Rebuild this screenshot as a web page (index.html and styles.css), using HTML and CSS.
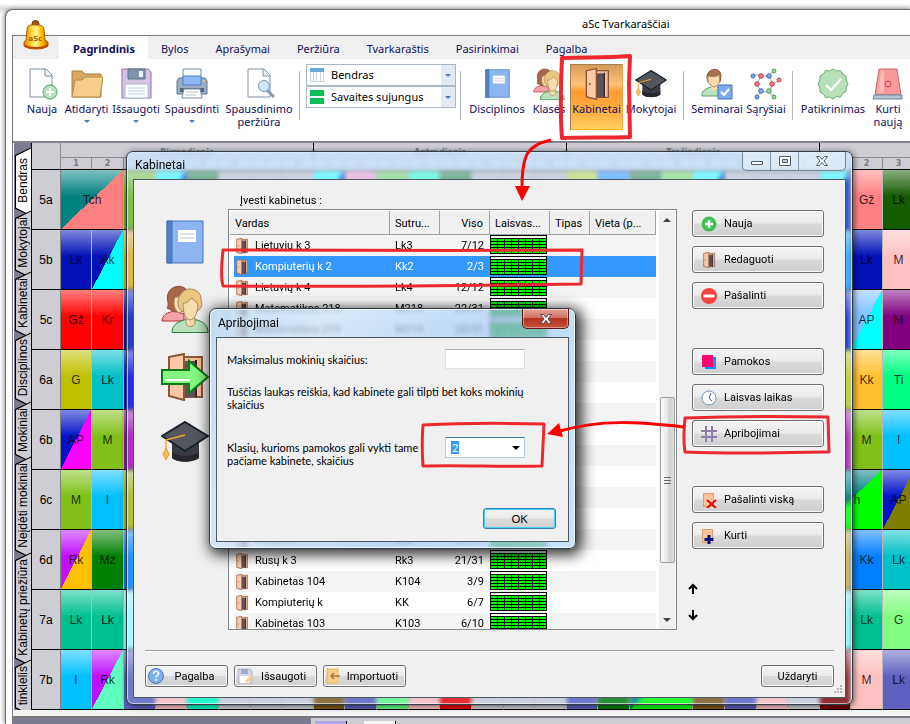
FILE: index.html
```html
<!DOCTYPE html>
<html lang="lt">
<head>
<meta charset="utf-8">
<title>aSc Tvarkaraščiai</title>
<link rel="stylesheet" href="styles.css">
</head>
<body>
<svg class="defs" aria-hidden="true">
  <symbol id="i-book" viewBox="0 0 38 44">
    <path d="M1 1h36v42H1z" fill="#8bb4f0" stroke="#4573b4"/>
    <path d="M1 1h5v42H1z" fill="#5280c2" stroke="#4573b4"/>
    <path d="M12 10h18v12H12z" fill="#fff"/><path d="M14 14h14M14 18h14" stroke="#b4c4dc"/>
  </symbol>
  <symbol id="i-people" viewBox="0 0 48 48">
    <path d="M1 36c0-6 6-9 13-10l9 3v7z" fill="#f4a3a8" stroke="#b03030"/>
    <path d="M6 23c3-4-1-8 1-14C10-1 25-1 27 8l-3 17-10 2c-3-1-5-3-8-4z" fill="#a6674a" stroke="#84503a"/>
    <path d="M14 12c3 1 6-2 8-4l4 14-8 6c-5-3-6-10-4-16z" fill="#f9dcae" stroke="#a9855a"/>
    <path d="M11 47.500c0-7 5-11 14-13h9c9 2 13 6 13 13z" fill="#bce0bf" stroke="#248534"/>
    <path d="M25 33v6c3 4 7 3 9-1v-5z" fill="#f9dcae" stroke="#a9855a"/>
    <path d="M18 23c-3-8 1-17 9-19 9-1 14 6 13 11 2 5 0 8-2 10l-3 2H22z" fill="#eac680" stroke="#a9855a"/>
    <path d="M22 18c4 1 6-3 9-5 2 4 5 3 6 7-1 9-3 14-8 15-5-1-7-8-7-17z" fill="#f9dcae" stroke="#a9855a"/>
  </symbol>
  <symbol id="i-door" viewBox="0 0 36 48">
    <path d="M7 4h28v40H7z" fill="#f7bd95" stroke="#8a563c" stroke-width="2"/>
    <path d="M17 8h13v36H17z" fill="#5e5058"/><path d="M29 7v37" stroke="#33262c" stroke-width="2"/>
    <path d="M2 4 17 1v46L2 43z" fill="#fbc9a5" stroke="#8a563c" stroke-width="2"/>
    <circle cx="7" cy="24" r="1.500" fill="#8a563c"/>
  </symbol>
  <symbol id="i-cap" viewBox="0 0 48 42">
    <path d="M11 18v18c3 6 23 6 27 0V18z" fill="#3b3c43"/><path d="M11 31v6c5 5 21 5 27 0v-6c-5 5-21 5-27 0z" fill="#27282d"/>
    <path d="M24 1 47 15 24 30 1 15z" fill="#54575d" stroke="#17232e" stroke-width="2"/>
    <path d="M24 14 5 19v9" fill="none" stroke="#f1a333" stroke-width="1.500"/><path d="m5 27 3 6-3 6-3-6z" fill="#f8bd58" stroke="#e89a28"/>
  </symbol>
</svg>

<div class="window">
  <header class="titlebar">
    <svg class="bell" viewBox="0 0 26 30" aria-hidden="true">
      <defs><linearGradient id="gold"><stop offset="0" stop-color="#e87800"/><stop offset=".3" stop-color="#ffd52a"/><stop offset=".5" stop-color="#fff3a0"/><stop offset=".7" stop-color="#ffc800"/><stop offset="1" stop-color="#c86a00"/></linearGradient></defs>
      <circle cx="12.500" cy="4" r="3.500" fill="#a85508" stroke="#6e3508"/>
      <path d="M4 10c0-6 4-5 8.500-5S21 5 21 10l1 10 3 2v4c-4 4-20 4-24 0v-4l2-2z" fill="url(#gold)" stroke="#b35b04"/>
      <path d="M1 24c5 4 19 4 24 0v2c-5 4-19 4-24 0z" fill="#b84a05"/>
      <text x="12.500" y="21" class="bell-text">aSc</text>
    </svg>
    <span>aSc Tvarkaraščiai</span>
  </header>
  <div class="frame">
    <nav class="tabs">
      <a href="#" class="tab tab-on">Pagrindinis</a><a href="#" class="tab">Bylos</a><a href="#" class="tab">Aprašymai</a><a href="#" class="tab">Peržiūra</a><a href="#" class="tab">Tvarkaraštis</a><a href="#" class="tab">Pasirinkimai</a><a href="#" class="tab">Pagalba</a>
    </nav>
    <div class="ribbon">
      <button class="tool w40"><svg viewBox="0 0 32 32"><path d="M4 1h16l6 6v22H4z" fill="#fff" stroke="#7d91a5"/><path d="M19 1v7h7" fill="#eef3f8" stroke="#7d91a5"/><circle cx="24" cy="24" r="7" fill="#b9e2bd" stroke="#57a068"/><path d="M24 20v8M20 24h8" stroke="#fff" stroke-width="2"/></svg>Nauja</button>
      <button class="tool w49"><svg viewBox="0 0 32 32"><path d="M1 29V3h10l3 3h16v23z" fill="#d7a762" stroke="#a8803c"/><path d="M1 29 4 12h7l3-3h18l-3 20z" fill="#f5ce8a" stroke="#b08c4c"/></svg>Atidaryti<i class="caret"></i></button>
      <button class="tool w50"><svg viewBox="0 0 32 32"><path d="M2 1h26l3 3v26H2z" fill="#d5c2e4" stroke="#8e73ac"/><path d="M8 1h17v10H8z" fill="#8195aa" stroke="#5e7288"/><path d="M19 3h4v6h-4z" fill="#eaf1f7"/><path d="M5 16h23v14H5z" fill="#fff" stroke="#a8bdd4"/><path d="M8 20h17M8 23h17M8 26h17" stroke="#b8d0ec"/></svg>Išsaugoti<i class="caret"></i></button>
      <button class="tool w62"><svg viewBox="0 0 32 32"><path d="M7 1h18v9H7z" fill="#f7fafc" stroke="#758ca4"/><path d="M3 10h26l2 3v13H1V13z" fill="#9aadc6" stroke="#5d7795"/><path d="M7 8h18v9H7z" fill="#8bb8f4" stroke="#4c7fc0"/><path d="M4 20h24v4H4z" fill="#52657c"/><path d="M8 21h16l2 9H6z" fill="#fff" stroke="#7c90a6"/><path d="M10 24h12M10 27h10" stroke="#b2bdc9"/><circle cx="28" cy="13" r="1" fill="#ffc84a"/></svg>Spausdinti<i class="caret"></i></button>
      <button class="tool w72"><svg viewBox="0 0 32 32"><path d="M5 1h16l6 6v22H5z" fill="#fff" stroke="#7d91a5"/><path d="M20 1v7h7" fill="#eef3f8" stroke="#7d91a5"/><path d="m24 22 7 7" stroke="#8499b0" stroke-width="3"/><circle cx="21" cy="18" r="5.500" fill="#cfe7fc" stroke="#7899b8"/></svg>Spausdinimo<br>peržiūra</button>
      <span class="sep"></span>
      <div class="combos">
        <label class="combo"><svg viewBox="0 0 14 14"><path d="M0 0h14v14H0z" fill="#c4d2e0"/><path d="M0 0h14v4H0z" fill="#6fa6d8"/><path d="M1 4h2v9H1zM4 4h2v9H4zM7 4h3v9H7zM11 4h2v9h-2z" fill="#fff"/></svg><select aria-label="Vaizdas"><option>Bendras</option></select><i class="caret"></i></label>
        <label class="combo"><svg viewBox="0 0 14 14"><path d="M0 0h14v6H0zM0 8h14v6H0z" fill="#06bf55"/></svg><select aria-label="Savaitės"><option>Savaites sujungus</option></select><i class="caret"></i></label>
      </div>
      <span class="sep sep-tight"></span>
      <button class="tool w62"><svg viewBox="0 0 32 32"><use href="#i-book" x="4" y="1" width="25" height="29"/></svg>Disciplinos</button>
      <button class="tool w42"><svg viewBox="0 0 32 32"><use href="#i-people"/></svg>Klasės</button>
      <button class="tool tool-on w53"><svg viewBox="0 0 32 32"><use href="#i-door"/></svg>Kabinetai</button>
      <button class="tool w56"><svg viewBox="0 0 32 32"><use href="#i-cap"/></svg>Mokytojai</button>
      <span class="sep"></span>
      <button class="tool w54"><svg viewBox="0 0 32 32"><path d="M1 28c0-6 4-8 10-9 9 0 13 3 13 9z" fill="#bce0bf" stroke="#60a06c"/><path d="M10 16h6v5c-2 2-4 2-6 0z" fill="#f9dcae"/><path d="M6 10C5 0 20-2 20 8l-1 6H7z" fill="#a6704c" stroke="#825238"/><path d="M7 8c4 1 8 1 11-1 2 7-1 11-5 12-4-1-7-5-6-11z" fill="#f9dcae" stroke="#b08a5a"/><path d="M17 17h14v14H17z" fill="#7fabec" stroke="#4573b4"/><path d="m20 24 3 3 5-6" fill="none" stroke="#fff" stroke-width="2"/></svg>Seminarai</button>
      <button class="tool w44"><svg viewBox="0 0 32 32"><g fill="none" stroke="#9aa8b4"><path d="m11 8-4 8 4 8 8 0 4-8-4-8zM2 7h9M19 8l5-6M23 16l7-4M11 24l-5 6M19 24l5 6"/></g><g fill="#f27c84" stroke="#b94650"><circle cx="11" cy="8" r="2.300"/><circle cx="7" cy="16" r="2.300"/><circle cx="22" cy="16" r="2.300"/><circle cx="29" cy="12" r="2"/></g><g fill="#78a9ef" stroke="#416eaa"><circle cx="3" cy="8" r="2"/><circle cx="19" cy="8" r="2.300"/><circle cx="11" cy="23" r="2.300"/><circle cx="7" cy="29" r="2"/></g><g fill="#98d5a0" stroke="#519c60"><circle cx="24" cy="3" r="2"/><circle cx="19" cy="23" r="2.300"/><circle cx="24" cy="29" r="2"/></g></svg>Sąryšiai</button>
      <span class="sep"></span>
      <button class="tool w68"><svg viewBox="0 0 32 32"><path d="m16 1 3.500 2 4-.5 2 3.500 3.500 2v4l2 4-2 3.500v4l-3.500 2-2 3.500-4-.5L16 31l-3.500-2-4 .5-2-3.500L3 24v-4l-2-4 2-4V8l3.500-2 2-3.500 4 .5z" fill="#b8e0ba" stroke="#67ab74"/><path d="m9 17 5 5 10-11" fill="none" stroke="#fff" stroke-width="2"/></svg>Patikrinimas</button>
      <button class="tool w42"><svg viewBox="0 0 32 32"><path d="M7 1h18l4 26H3z" fill="#f79a9c" stroke="#c9656c"/><path d="m9 3-3 22h6V3z" fill="#fbb9b9"/><circle cx="16" cy="16" r="3" fill="none" stroke="#c2474f"/><path d="M2 27h28v4H1z" fill="#b6c5d4" stroke="#71869c"/></svg>Kurti<br>naują</button>
    </div>
    <div class="work">
      <div class="side">
        <button class="vtab vtab-on"><span>Bendras</span></button><button class="vtab"><span>Mokytojai</span></button><button class="vtab"><span>Kabinetai</span></button><button class="vtab"><span>Disciplinos</span></button><button class="vtab"><span>Mokiniai</span></button><button class="vtab"><span>Neįdėti mokiniai</span></button><button class="vtab"><span>Kabinetų priežiūra</span></button><button class="vtab"><span>tinklelis</span></button>
      </div>
      <div class="sheet"><table class="tt" id="tt"></table></div>
    </div>
    <div class="split"></div>
    <div class="tray"><div class="tray-left"></div><i class="chip lilac"></i><i class="chip"></i></div>
  </div>
</div>

<section class="dialog rooms" aria-label="Kabinetai">
  <div class="dlg-title"><span>Kabinetai</span>
    <div class="winbtns">
      <button aria-label="Sumažinti"><svg viewBox="0 0 14 12"><path d="M1.500 6.500h11v3h-11z" fill="#fff" stroke="#555c68"/></svg></button>
      <button aria-label="Padidinti"><svg viewBox="0 0 14 12"><path d="M1.500 1.500h11v9h-11z" fill="#fff" stroke="#555c68"/><path d="M4.500 4.500h5v3h-5z" fill="#bcd0e6" stroke="#555c68"/></svg></button>
      <button class="wide" aria-label="Uždaryti langą"><svg viewBox="0 0 14 12"><path d="M1.500 1.500h3l2.500 3 2.500-3h3L9 6l3.500 4.500h-3L7 7.500l-2.500 3h-3L5 6z" fill="#fff" stroke="#555c68"/></svg></button>
    </div>
  </div>
  <div class="panel">
    <div class="cols">
      <div class="steps">
        <svg width="40" height="46" viewBox="-1 -1 40 46"><use href="#i-book" width="38" height="44"/></svg>
        <svg width="48" height="48"><use href="#i-people" width="48" height="48"/></svg>
        <svg width="48" height="48"><use href="#i-door" x="6" width="36" height="48"/><path d="M1 17h27V8l19 16-19 16v-9H1z" fill="#86f683" stroke="#0c7a14" stroke-width="2"/><path d="M4 27h25" stroke="#fff" stroke-width="2"/></svg>
        <svg width="48" height="42"><use href="#i-cap" width="48" height="42"/></svg>
      </div>
      <div class="listcol">
        <p class="caption">Įvesti kabinetus :</p>
        <div class="list">
          <table class="rt">
            <colgroup><col class="c-name"><col class="c-short"><col class="c-all"><col class="c-free"><col class="c-type"><col class="c-place"></colgroup>
            <thead><tr><th>Vardas</th><th>Sutru...</th><th class="num">Viso</th><th>Laisvas...</th><th>Tipas</th><th>Vieta (p...</th></tr></thead>
            <tbody id="rooms"></tbody>
          </table>
          <div class="scroll"><i class="up"></i><div class="thumb"><i></i><i></i><i></i></div><i class="down"></i></div>
        </div>
      </div>
      <div class="actions">
        <button class="act"><svg viewBox="0 0 16 16"><circle cx="8" cy="8" r="7.500" fill="#3fc14d"/><path d="M8 4v8M4 8h8" stroke="#fff" stroke-width="2.500"/></svg>Nauja</button>
        <button class="act"><svg viewBox="0 0 16 16"><use href="#i-door"/></svg>Redaguoti</button>
        <button class="act"><svg viewBox="0 0 16 16"><circle cx="8" cy="8" r="8" fill="#f8413d"/><path d="M2.500 6.500h11v3h-11z" fill="#fff"/></svg>Pašalinti</button>
        <button class="act gap-top"><svg viewBox="0 0 16 16"><path d="M4 3h11v12H4z" fill="#0794ff"/><path d="M1 1h11v12H1z" fill="#ff0576"/></svg>Pamokos</button>
        <button class="act"><svg viewBox="0 0 16 16"><circle cx="8" cy="8" r="7" fill="#fff" stroke="#6f91bb"/><path d="M10 3 8 8l3 3" fill="none" stroke="#385a90"/></svg>Laisvas laikas</button>
        <button class="act"><svg viewBox="0 0 16 16"><path d="M5 0v16M11 0v16M0 5h16M0 11h16" stroke="#8e7da8" stroke-width="2"/></svg>Apribojimai</button>
        <button class="act gap-more"><svg viewBox="0 0 16 16"><path d="M2.500 1.500h10v13h-10z" fill="#ffc59c" stroke="#d59b72"/><path d="m6 8 9 8M15 8l-9 8" stroke="#e90808" stroke-width="2"/></svg>Pašalinti viską</button>
        <button class="act"><svg viewBox="0 0 16 16"><path d="M1.500 1.500h10v13h-10z" fill="#ffc59c" stroke="#d59b72"/><path d="M8 7v9M3.500 11.500h9" stroke="#08127e" stroke-width="3"/></svg>Kurti</button>
        <button class="move move-up" aria-label="Aukštyn"><svg viewBox="0 0 10 12"><path d="M5 11V2M1 6l4-4 4 4" fill="none" stroke="#000" stroke-width="2"/></svg></button>
        <button class="move" aria-label="Žemyn"><svg viewBox="0 0 10 12"><path d="M5 1v9M1 6l4 4 4-4" fill="none" stroke="#000" stroke-width="2"/></svg></button>
      </div>
    </div>
    <div class="foot">
      <button class="btn"><svg viewBox="0 0 16 16"><circle cx="8" cy="8" r="7.500" fill="#7faeea" stroke="#4d7cbc"/><path d="M5.500 6c0-4 6-3 5 0-1 1.500-2.500 1.500-2.500 3.500M8 11v2" fill="none" stroke="#fff" stroke-width="1.500"/></svg><span>Pagalba</span></button>
      <button class="btn"><svg viewBox="0 0 16 16"><path d="M1 1h12l2 2v12H1z" fill="#d9d3ea" stroke="#bcb3d6"/><path d="M4 1h7v5H4z" fill="#9fb0c4"/><path d="M3 8h9v7H3z" fill="#fff"/><path d="m8 13 6-6 2 2-6 6z" fill="#f4cf84"/></svg><span>Išsaugoti</span></button>
      <button class="btn"><svg viewBox="0 0 16 16"><path d="M1 1h11v14H1z" fill="#f4d08c" stroke="#e5b866"/><path d="M14 8H5M8 5 5 8l3 3" fill="none" stroke="#a87931" stroke-width="1.500"/></svg><span>Importuoti</span></button>
      <button class="btn btn-close"><span>Uždaryti</span></button>
    </div>
    <svg class="grip" viewBox="0 0 9 9"><path d="M7 1h2M4 4h2M7 4h2M1 7h2M4 7h2M7 7h2" stroke="#b8b8b8" stroke-width="2"/></svg>
  </div>
</section>

<section class="dialog limits" aria-label="Apribojimai">
  <div class="dlg-title"><span>Apribojimai</span>
    <button class="close" aria-label="Uždaryti"><svg viewBox="0 0 14 12"><path d="M1.500 1.500h3l2.500 3 2.500-3h3L9 6l3.500 4.500h-3L7 7.500l-2.500 3h-3L5 6z" fill="#fff" stroke="#5b4750"/></svg></button>
  </div>
  <form class="panel">
    <div class="field"><label for="max">Maksimalus mokinių skaičius:</label><input id="max" type="text"></div>
    <p class="note">Tuščias laukas reiškia, kad kabinete gali tilpti bet koks mokinių<br>skaičius</p>
    <div class="field"><label for="cls">Klasių, kurioms pamokos gali vykti tame pačiame kabinete, skaičius</label><span class="pick"><select id="cls"><option>2</option></select><i class="caret"></i></span></div>
    <button type="button" class="ok">OK</button>
  </form>
</section>

<svg class="marks" width="910" height="724" viewBox="0 0 910 724" aria-hidden="true">
  <g fill="none" stroke="#ed2830" stroke-width="4" stroke-linejoin="round" stroke-linecap="round">
    <path d="M562 58c22-1 45 0 68-2l-1 27 1 54c-22 1-40 0-68 1-2-24-1-56 0-80z"/>
    <path d="M223 250c110 0 240 1 359 0l-1 34c-120 2-230 3-358 2-3-12-1-24 0-36z" stroke-width="3"/>
    <path d="M685 418c50-2 95-2 143-1l1 35c-50 1-95 2-144 0-2-12-1-24 0-34z" stroke-width="3"/>
    <path d="M423 425c40-2 80-2 121-1l-2 42c-40 1-80-1-119 0-1-14-1-28 0-41z" stroke-width="3"/>
  </g>
  <g fill="none" stroke="#f00" stroke-width="3">
    <path d="M551 140c-24 5-29 15-29 48"/><path d="M684 427c-47-5-82-8-124 4"/>
  </g>
  <path d="M515 186h15l-8 15zM547 434l12-11 4 14z" fill="#f00"/>
</svg>
<script src="script.js"></script>
</body>
</html>
```

FILE: styles.css
```css
* { box-sizing: border-box; }
body { margin: 0; padding: 9px 0 0 5px; min-height: 100vh; overflow: hidden; background: linear-gradient(#fff 0, #fff 3px, #dcdcdc 9px, #fff 14px); font: 11px/13px "Noto Sans", sans-serif; color: #000; position: relative; }
button { font: inherit; color: inherit; padding: 0; margin: 0; border: 0; background: none; }
p { margin: 0; }
.defs { position: absolute; width: 0; height: 0; }

.window { background: #fff; border: 1px solid #6e6e6e; border-width: 1px 0 0 1px; border-radius: 8px 0 0 0; box-shadow: -1px 0 4px rgba(0,0,0,.4); padding-left: 6px; min-height: calc(100vh - 9px); }
.titlebar { height: 25px; padding: 7px 0 0 570px; position: relative; font-size: 11px; white-space: nowrap; }
.bell { position: absolute; left: 11px; top: 10px; width: 26px; height: 30px; z-index: 1; }
.bell-text { font: bold 7px "DejaVu Sans", sans-serif; text-anchor: middle; fill: #a85a08; }
.frame { border: 1px solid #7a7a7a; border-width: 1px 0 0 1px; }
.tabs { display: flex; height: 23px; background: #efefef; padding-left: 46px; }
.tab { padding: 6px 14px 0 13px; color: #10105c; text-decoration: none; white-space: nowrap; }
.tab-on { background: #fff; font-weight: bold; padding: 6px 13px 0 14px; }

.ribbon { display: flex; height: 82px; padding: 5px 0 0 9px; color: #10105c; overflow: hidden; }
.tool { display: flex; flex: none; flex-direction: column; align-items: center; white-space: nowrap; height: 66px; padding-top: 3px; border: 1px solid transparent; }
.tool svg { width: 32px; height: 32px; flex: none; margin-bottom: 2px; }
.tool-on { background: linear-gradient(#d89a58, #ffc27a 30%, #ff9a30 42%, #ffb648 80%, #ffcf60); border-color: #a68050 #e8a848 #f5b020 #a68050; }
.w40 { width: 40px; } .w42 { width: 42px; } .w44 { width: 44px; } .w49 { width: 49px; } .w50 { width: 50px; } .w53 { width: 53px; } .w54 { width: 54px; } .w56 { width: 56px; } .w62 { width: 62px; } .w68 { width: 68px; } .w72 { width: 72px; }
.caret { flex: none; width: 0; height: 0; border: 3px solid transparent; border-top-color: #4a7ab8; border-bottom: 0; }
.tool .caret { margin-top: 5px; }
.sep { flex: none; width: 1px; height: 49px; margin: 7px 6px 0 4px; background: #b8bcc2; }
.sep-tight { margin-right: 5px; }
.combos { width: 150px; flex: none; }
.combo { display: flex; align-items: center; height: 22px; border: 1px solid #a9b8c8; padding-left: 3px; background: linear-gradient(90deg, #fff 134px, #e4eaf3 134px); }
.combo svg { width: 14px; height: 14px; }
.combo select { appearance: none; border: 0; background: none; flex: 1; min-width: 0; padding: 0 0 0 7px; font: inherit; line-height: 16px; color: #000; }
.combo .caret { margin-right: 4px; }

.work { display: flex; border-top: 2px solid #84848c; padding-left: 1px; }
.side { width: 18px; flex: none; height: 567px; overflow: hidden; display: flex; flex-direction: column; background: #7b7b90; padding-top: 6px; border-right: 1px solid #000; }
.vtab { flex: none; position: relative; width: 18px; padding: 6px 0 5px; writing-mode: vertical-rl; transform: rotate(180deg); font: 12px/18px "Liberation Sans", sans-serif; text-align: center; }
.vtab span { position: relative; z-index: 2; }
.vtab::before, .vtab::after { content: ""; position: absolute; inset: -5px 1px -2px 0; background: #000; clip-path: polygon(0 0, 100% 8px, 100% calc(100% - 8px), 0 100%); }
.vtab::after { inset: -4px 2px -1px 0; background: #cecdd3; }
.vtab-on { padding: 9px 0; }
.vtab-on::after { background: #fff; }
.sheet { flex: 1; min-width: 0; overflow: hidden; }
.tt { table-layout: fixed; width: 883px; border-spacing: 0; font: 12px "Liberation Sans", sans-serif; background: #cecdd3; }
.tt col { width: 32px; }
.tt col.hd { width: 29px; }
.tt col.slim { width: 31px; }
.tt th, .tt td { padding: 0; text-align: center; font-weight: normal; overflow: hidden; white-space: nowrap; }
.tt thead th { border-right: 1px solid #8c8c92; color: #7a7a80; font: bold 8px/10px "DejaVu Sans", sans-serif; }
.tt .days th { height: 15px; border-bottom: 1px solid #8c8c92; vertical-align: bottom; line-height: 8px; }
.tt .days th + th { border-right-color: #000; }
.tt .hours th { height: 12px; border-bottom: 1px solid #000; }
.tt .days .none { border-bottom: 0; }
.tt tbody th, .tt td { height: 60px; border-bottom: 1px solid #000; border-right: 1px solid #b8b8b8; }
.tt tbody th { border-right-color: #808080; }
.tt td { color: rgba(0,0,0,.8); background-color: var(--a, #cecdd3); }
.tt .lesson { background-image: linear-gradient(rgba(255,255,255,.5), transparent 45%); }
.tt .split-lesson { background-image: linear-gradient(to bottom right, transparent 50%, var(--b) 50%), linear-gradient(rgba(255,255,255,.5), transparent 45%); }
.split { height: 8px; background: #f4f4f4; border-bottom: 2px solid #77777c; }
.tray { display: flex; height: 6px; background: #cecdd3; gap: 17px; align-items: flex-end; }
.tray-left { width: 298px; height: 6px; background: #7b7b90; margin-right: -13px; }
.chip { width: 32px; height: 3px; background: #f4f4f4; border-right: 1px solid #000; }
.lilac { background: #b0a8e8; }

.dialog { position: absolute; border: 1px solid #303c48; border-radius: 7px; padding: 0 6px 6px; background: rgba(190,220,255,.2); backdrop-filter: blur(2px); box-shadow: inset 0 0 0 1px rgba(255,255,255,.6), 1px 1px 6px rgba(0,0,0,.6); font: 11px/13px Roboto, sans-serif; }
.rooms { left: 126px; top: 151px; width: 727px; }
.limits { left: 209px; top: 308px; width: 367px; background: linear-gradient(115deg, rgba(178,212,242,.7), rgba(205,226,248,.75) 25%, rgba(165,205,245,.7) 60%, rgba(190,222,255,.8)); box-shadow: inset 0 0 0 1px rgba(255,255,255,.75), 3px 3px 14px 3px rgba(0,0,0,.8); }
.dlg-title { display: flex; justify-content: space-between; height: 27px; margin: 0 -5px; padding: 0 5px 0 7px; border-radius: 6px 6px 0 0; background: linear-gradient(rgba(205,230,255,.75), rgba(205,230,255,.75) 16px, rgba(205,230,255,.1) 20px); line-height: 27px; font-size: 12px; }
.limits .dlg-title { height: 28px; background: none; line-height: 28px; }
.winbtns { display: flex; height: 19px; border: 1px solid #76879a; border-top: 0; border-radius: 0 0 5px 5px; background: rgba(255,255,255,.35); }
.winbtns button { width: 28px; height: 18px; border-right: 1px solid #8a9bac; display: grid; place-items: center; }
.winbtns button.wide { width: 46px; border: 0; }
.winbtns svg, .close svg { width: 14px; height: 12px; }
.close { width: 47px; height: 20px; display: grid; place-items: center; border: 1px solid #5c1a18; border-top: 0; border-radius: 0 0 5px 5px; background: linear-gradient(#e5a79a, #cf7060 45%, #b03420 50%, #c85038); box-shadow: inset 0 0 0 1px rgba(255,255,255,.4); }
.panel { position: relative; background: #f0f0f0; border: 1px solid #4c5862; }

.rooms .panel { padding: 14px 11px 10px 11px; }
.cols { display: flex; padding-right: 10px; }
.steps { width: 83px; display: flex; flex-direction: column; align-items: center; padding: 25px 3px 0 0; }
.steps svg { flex: none; margin-bottom: 20px; }
.listcol { flex: 1; min-width: 0; }
.caption { padding-left: 12px; margin-bottom: 2px; font-size: 11px; }
.list { display: flex; justify-content: space-between; height: 421px; border: 1px solid #828790; background: #fff; padding: 1px 1px 0; overflow: hidden; }
.rt { table-layout: fixed; width: 426px; border-spacing: 0; flex: none; align-self: flex-start; }
.c-name { width: 160px; } .c-short { width: 50px; } .c-all { width: 50px; } .c-free { width: 60px; } .c-type { width: 40px; } .c-place { width: 66px; }
.rt th { height: 24px; padding: 2px 0 0 5px; text-align: left; font-weight: normal; background: #f0f0f0; border-right: 1px solid #a0a0a0; border-bottom: 1px solid #a0a0a0; white-space: nowrap; }
.rt th.num { text-align: right; padding-right: 6px; }
.rt td { height: 21px; padding: 0 0 0 5px; white-space: nowrap; }
.rt td:first-child { padding-left: 2px; }
.rt td.num { text-align: right; padding-right: 6px; }
.rt td.free { padding: 0; vertical-align: top; }
.rt tr:nth-child(odd) td { background: #f4f4f4; }
.rt tbody tr.sel td { background: #3399ff; color: #fff; }
.rt tbody td:first-child { border-left: 4px solid #fff; }
.roomname { display: flex; align-items: center; gap: 7px; }
.roomname svg { width: 12px; height: 16px; }
.mini { width: 57px; height: 19px; border: solid #000; border-width: 1px 0 0 1px; background: repeating-linear-gradient(90deg, transparent 0 6px, #000 6px 7px), linear-gradient(#000, #000) 0 2px / 100% 1px no-repeat, repeating-linear-gradient(#0f0 0 2px, #000 2px 3px) 0 3px / 100% 15px no-repeat, #fff; }
.mini::before { content: ""; display: block; height: 2px; background: #fff; border-right: 1px solid #000; }
.scroll { width: 16px; display: flex; flex-direction: column; align-items: center; background: #f0f0f0; padding: 7px 0; }
.up, .down { border: 4px solid transparent; border-top: 0; border-bottom: 4px solid #404040; }
.down { border-top: 4px solid #404040; border-bottom: 0; margin-top: auto; }
.thumb { width: 15px; height: 166px; margin-top: 175px; border: 1px solid #a0a0a0; border-radius: 2px; background: linear-gradient(90deg, #f8f8f8, #e8e8e8 50%, #d2d2d6 60%, #dcdcdc); display: flex; flex-direction: column; align-items: center; justify-content: center; gap: 2px; }
.thumb i { width: 7px; height: 1px; background: #666; }
.actions { width: 147px; padding: 16px 0 0 15px; display: flex; flex-direction: column; gap: 9px; }
.act, .btn { border: 1px solid #707070; border-radius: 3px; background: linear-gradient(#f4f4f4, #ebebeb 48%, #dadada 52%, #cfcfcf); box-shadow: inset 0 0 0 1px #fafafa; }
.act { height: 27px; display: flex; align-items: center; gap: 7px; padding-left: 8px; }
.act svg { width: 16px; height: 16px; }
.gap-top, .gap-more { margin-top: 30px; }
.move { width: 10px; height: 12px; margin: 0 0 5px -4px; }
.move-up { margin-top: 25px; }
.move svg { display: block; width: 10px; height: 12px; }
.foot { display: flex; gap: 6px; margin-top: 20px; padding-top: 14px; border-top: 1px solid #a0a0a0; box-shadow: inset 0 1px #fff; }
.btn { width: 83px; height: 22px; display: flex; align-items: center; padding: 0 2px; }
.btn span { flex: 1; }
.btn svg { width: 16px; height: 16px; }
.btn-close { width: 73px; margin-left: auto; }
.grip { position: absolute; right: 3px; bottom: 3px; width: 9px; height: 9px; }

.limits .panel { padding: 11px 12px 12px 10px; display: flex; flex-direction: column; font-family: Lato, sans-serif; }
.field { display: flex; justify-content: space-between; align-items: flex-start; padding-right: 31px; }
.field label { width: 200px; padding-top: 4px; }
.field input { width: 80px; height: 20px; border: 1px solid #dde2ea; border-top-color: #abadb3; background: #fff; }
.note { margin: 16px 0 26px; white-space: nowrap; }
.pick { position: relative; }
.pick select { appearance: none; display: block; width: 80px; height: 21px; border: 1px solid #b0cfe4; border-top-color: #3d7bad; border-radius: 0; padding: 0 0 0 6px; font: inherit; color: #fff; background: linear-gradient(#3399ff, #3399ff) 5px 3px / 8px 13px no-repeat #fff; }
.pick .caret { position: absolute; right: 5px; top: 9px; border-width: 4px; border-bottom: 0; border-top-color: #000; }
.ok { align-self: flex-end; width: 73px; height: 21px; margin-top: 41px; border: 1px solid #3c7fb1; border-radius: 3px; background: linear-gradient(#f2f2f2, #ebebeb 48%, #dadada 52%, #cfcfcf); box-shadow: inset 0 0 0 1px #48d0f4; }
.marks { position: absolute; left: 0; top: 0; pointer-events: none; }
```

FILE: script.js
```js
// Lessons by class: [column, subject, colour, second colour, span]
const plan = {
  "5a": [[0,"Tch","#008080","#ff8080",2],[2,"","#70b818"],[3,"","#00ffff","#0030c0"],[4,"","#086820"],
    [8,"","#00ffff","#0030c0"],[9,"","#f088b8"],[10,"","#60c840"],[11,"","#00ffc0"],[12,"","#086820"],
    [16,"","#b0d020"],[17,"","#0080ff"],[18,"","#086820"],[19,"","#60d840"],[20,"","#00ffff","#0030c0"],
    [24,"","#00ffff","#0030c0"],[25,"Gž","#ff8080"],[26,"Lk","#145c00"]],
  "5b": [[0,"Lk","#0012b8"],[1,"Ak","#0012b8","#00ffff"],[2,"","#e8b020"],[24,"","#10b0ff"],[25,"Lk","#0012b8"],[26,"M","#ffc0c0"]],
  "5c": [[0,"Gž","#ff0000"],[1,"Kr","#ff0000"],[2,"","#0012b8"],[24,"","#0012b8"],[25,"AP","#80c0ff","#00ffff"],[26,"M","#800080"]],
  "6a": [[0,"G","#c0c000"],[1,"Lk","#00c0c8"],[2,"","#0000e0"],[24,"","#b8d010"],[25,"Kk","#ffc030"],[26,"Ti","#00ff80"]],
  "6b": [[0,"AP","#0012c8","#ff00ff"],[1,"M","#80c018"],[2,"","#b000b8"],[24,"","#b000b8"],[25,"M","#80c018"],[26,"I","#00c0ff"]],
  "6c": [[0,"M","#80c018"],[1,"I","#00c0ff"],[2,"","#b0b808"],[24,"Tch","#008080","#00ff00",2],[26,"AP","#0012c8","#808000"]],
  "6d": [[0,"Rk","#c010ff","#ffc000"],[1,"Mz","#008000"],[2,"","#0080ff"],[24,"","#e0b020"],[25,"Kk","#0080ff"],[26,"Lk","#00c0c8"]],
  "7a": [[0,"Lk","#00c090"],[1,"Lk","#00c090"],[2,"","#a0ffff"],[24,"","#a0ffff"],[25,"Lk","#00c090"],[26,"G","#80ff80"]],
  "7b": [[0,"I","#00c0ff"],[1,"Rk","#c010ff","#60ffc0"],[2,"","#6060c0"],[3,"","#ffc0c0"],[4,"","#00ffc0"],
    [8,"","#805810"],[9,"","#6060c0"],[10,"","#60ff80"],[11,"","#ffc0c0"],[12,"","#f00000"],
    [16,"","#6060c0"],[17,"","#008000"],[18,"","#008080","#00ff00",2],[20,"","#805810"],[21,"","#6060c0"],[22,"","#ffc0c0"],
    [24,"","#800000"],[25,"M","#ffc0c0"],[26,"Lk","#6060c0"]]
};
const days = [["Pirmadienis", 8], ["Antradienis", 8], ["Trečiadienis", 8], ["", 3]];
const slots = [...Array(27).keys()];
let html = '<colgroup><col class="hd">' + slots.map(i => `<col${[0, 3, 6].includes(i % 8) ? ' class="slim"' : ""}>`).join("") + "</colgroup><thead><tr class='days'><th class='none'></th>";
html += days.map(([d, n]) => `<th colspan="${n}">${d}</th>`).join("");
html += "</tr><tr class='hours'><th></th>" + slots.map(i => `<th>${i % 8 + 1}</th>`).join("") + "</tr></thead><tbody>";
for (const [name, lessons] of Object.entries(plan)) {
  html += `<tr><th>${name}</th>`;
  for (let i = 0; i < slots.length;) {
    const l = lessons.find(x => x[0] === i);
    if (!l) { html += "<td></td>"; i++; continue; }
    const [, text, a, b, span = 1] = l;
    html += `<td colspan="${span}" class="${b ? "split-lesson" : "lesson"}" style="--a:${a}${b ? ";--b:" + b : ""}">${text}</td>`;
    i += span;
  }
  html += "</tr>";
}
document.getElementById("tt").innerHTML = html + "</tbody>";

const rooms = [["Lietuvių k 3","Lk3","7/12"],["Kompiuterių k 2","Kk2","2/3"],["Lietuvių k 4","Lk4","12/12"],["Matematikos 218","M218","22/31"],["Matematikos 219","M219","20/31"],
  ...Array(9).fill(["","",""]),["Rusų k 2","Rk2","20/21"],["Rusų k 3","Rk3","21/31"],["Kabinetas 104","K104","3/9"],["Kompiuterių k","KK","6/7"],["Kabinetas 103","K103","6/10"]];
document.getElementById("rooms").innerHTML = rooms.map(([n, s, v], i) =>
  `<tr${i === 1 ? ' class="sel"' : ""}><td><div class="roomname"><svg><use href="#i-door"/></svg>${n}</div></td><td>${s}</td><td class="num">${v}</td><td class="free"><div class="mini"></div></td><td></td><td></td></tr>`).join("");
```
